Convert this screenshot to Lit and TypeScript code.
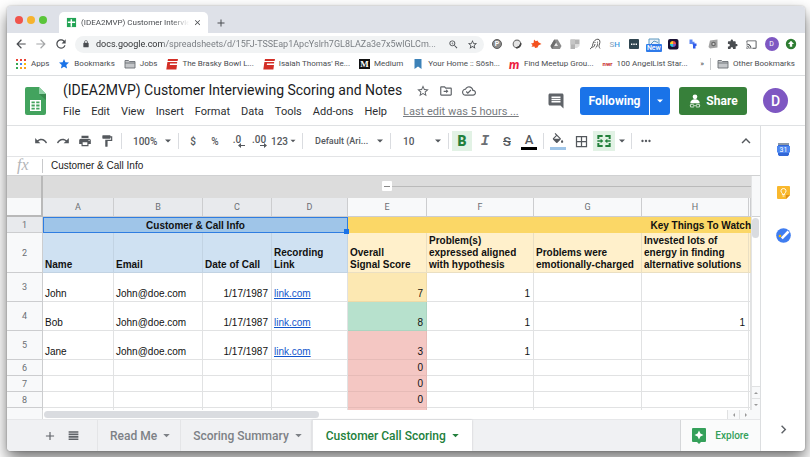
import { LitElement, html, css, svg, nothing } from "lit";
import { customElement } from "lit/decorators.js";
import { classMap } from "lit/directives/class-map.js";

const PATHS = {
  back: "M20 11H7.83l5.59-5.59L12 4l-8 8 8 8 1.41-1.41L7.83 13H20v-2z",
  forward: "M12 4l-1.41 1.41L16.17 11H4v2h12.17l-5.58 5.59L12 20l8-8z",
  refresh: "M17.65 6.35C16.2 4.9 14.21 4 12 4c-4.42 0-7.99 3.58-7.99 8s3.57 8 7.99 8c3.73 0 6.84-2.55 7.73-6h-2.08c-.82 2.33-3.04 4-5.65 4-3.31 0-6-2.69-6-6s2.69-6 6-6c1.66 0 3.14.69 4.22 1.78L13 11h7V4l-2.35 2.35z",
  lock: "M18 8h-1V6c0-2.76-2.24-5-5-5S7 3.24 7 6v2H6c-1.1 0-2 .9-2 2v10c0 1.1.9 2 2 2h12c1.1 0 2-.9 2-2V10c0-1.1-.9-2-2-2zm-3 0H9V6c0-1.66 1.34-3 3-3s3 1.34 3 3v2z",
  zoomIn: "M15.5 14h-.79l-.28-.27C15.41 12.59 16 11.11 16 9.5 16 5.91 13.09 3 9.5 3S3 5.91 3 9.5 5.91 16 9.5 16c1.61 0 3.09-.59 4.23-1.57l.27.28v.79l5 4.99L20.49 19l-4.99-5zm-6 0C7.01 14 5 11.99 5 9.5S7.01 5 9.5 5 14 7.01 14 9.5 11.99 14 9.5 14zM12 10h-2v2H9v-2H7V9h2V7h1v2h2v1z",
  star: "M22 9.24l-7.19-.62L12 2 9.19 8.63 2 9.24l5.46 4.73L5.82 21 12 17.27 18.18 21l-1.63-7.03L22 9.24zM12 15.4l-3.76 2.27 1-4.28-3.32-2.88 4.38-.38L12 6.1l1.71 4.04 4.38.38-3.32 2.88 1 4.28L12 15.4z",
  starFull: "M12 17.27L18.18 21l-1.64-7.03L22 9.24l-7.19-.61L12 2 9.19 8.63 2 9.24l5.46 4.73L5.82 21z",
  cloud: "M19.35 10.04C18.67 6.59 15.64 4 12 4 9.11 4 6.6 5.64 5.35 8.04 2.34 8.36 0 10.91 0 14c0 3.31 2.69 6 6 6h13c2.76 0 5-2.24 5-5 0-2.64-2.05-4.78-4.65-4.96zM19 18H6c-2.21 0-4-1.79-4-4 0-2.05 1.53-3.76 3.56-3.97l1.07-.11.5-.95C8.08 7.14 9.94 6 12 6c2.62 0 4.88 1.86 5.39 4.43l.3 1.5 1.53.11c1.56.1 2.78 1.41 2.78 2.96 0 1.65-1.35 3-3 3zm-9-3.82l-2.09-2.09L6.5 13.5 10 17l6.01-6.01-1.41-1.41z",
  moveTo: "M20 6h-8l-2-2H4c-1.1 0-2 .9-2 2v12c0 1.1.9 2 2 2h16c1.1 0 2-.9 2-2V8c0-1.1-.9-2-2-2zm0 12H4V6h5.2l2 2H20v10zM12.2 16l4-3.5-4-3.5v2.5H8v2h4.200z",
  comment: "M22 4c0-1.100-.9-2-2-2H4c-1.100 0-2 .9-2 2v12c0 1.100.9 2 2 2h14l4 4V4zM18 14H6v-2h12v2zm0-3H6V9h12v2zm0-3H6V6h12v2z",
  undo: "M12.5 8c-2.650 0-5.050.990-6.900 2.600L2 7v9h9l-3.620-3.620c1.390-1.160 3.160-1.880 5.120-1.880 3.540 0 6.550 2.310 7.600 5.500l2.370-.78C21.080 11.030 17.150 8 12.500 8z",
  redo: "M18.400 10.600C16.550 8.990 14.150 8 11.500 8c-4.650 0-8.580 3.030-9.960 7.220L3.900 16c1.050-3.190 4.050-5.500 7.600-5.500 1.950 0 3.730.720 5.120 1.880L13 16h9V7l-3.600 3.600z",
  print: "M19 8H5c-1.66 0-3 1.34-3 3v6h4v4h12v-4h4v-6c0-1.66-1.34-3-3-3zm-3 11H8v-5h8v5zm3-7c-.55 0-1-.45-1-1s.45-1 1-1 1 .45 1 1-.45 1-1 1zm-1-9H6v4h12V3z",
  paint: "M18 4V3c0-.55-.45-1-1-1H5c-.55 0-1 .45-1 1v4c0 .55.45 1 1 1h12c.55 0 1-.45 1-1V6h1v4H9v11c0 .55.45 1 1 1h2c.55 0 1-.45 1-1v-9h8V4h-3z",
  fill: "M16.56 8.94L7.62 0 6.21 1.41l2.38 2.38-5.15 5.15c-.59.59-.59 1.54 0 2.12l5.5 5.5c.29.29.68.44 1.06.44s.77-.15 1.06-.44l5.5-5.5c.59-.58.59-1.53 0-2.12zM5.21 10L10 5.21 14.79 10H5.21zM19 11.5s-2 2.17-2 3.5c0 1.1.9 2 2 2s2-.9 2-2c0-1.33-2-3.5-2-3.5z",
  borders: "M3 3v18h18V3H3zm8 16H5v-6h6v6zm0-8H5V5h6v6zm8 8h-6v-6h6v6zm0-8h-6V5h6v6z",
  merge: "M2 3h8v3H5v3H2zM14 3h8v6h-3V6h-5zM2 15h3v3h5v3H2zM19 15h3v6h-8v-3h5zM2 11h5V8.500l4 3.500-4 3.500V13H2zM22 11h-5V8.500L13 12l4 3.500V13h5z",
  up: "M12 8l-6 6 1.410 1.410L12 10.830l4.590 4.580L18 14z",
  right: "M10 6L8.590 7.410 13.170 12l-4.580 4.590L10 18l6-6z",
  more: "M6 10c-1.100 0-2 .9-2 2s.9 2 2 2 2-.9 2-2-.9-2-2-2zm12 0c-1.100 0-2 .9-2 2s.9 2 2 2 2-.9 2-2-.9-2-2-2zm-6 0c-1.100 0-2 .9-2 2s.9 2 2 2 2-.9 2-2-.9-2-2-2z",
  puzzle: "M20.5 11H19V7c0-1.1-.9-2-2-2h-4V3.5C13 2.12 11.88 1 10.5 1S8 2.12 8 3.500V5H4c-1.1 0-1.990.9-1.990 2v3.800H3.500c1.490 0 2.700 1.210 2.700 2.700s-1.210 2.700-2.700 2.700H2V20c0 1.100.9 2 2 2h3.800v-1.500c0-1.490 1.210-2.700 2.700-2.700 1.490 0 2.700 1.210 2.700 2.700V22H17c1.100 0 2-.9 2-2v-4h1.500c1.380 0 2.500-1.120 2.500-2.500S21.880 11 20.500 11z",
  cast: "M21 3H3c-1.1 0-2 .9-2 2v3h2V5h18v14h-7v2h7c1.1 0 2-.9 2-2V5c0-1.1-.9-2-2-2zM1 18v3h3c0-1.66-1.34-3-3-3zm0-4v2c2.76 0 5 2.24 5 5h2c0-3.87-3.13-7-7-7zm0-4v2c4.97 0 9 4.03 9 9h2c0-6.08-4.93-11-11-11z",
  close: "M19 6.410L17.590 5 12 10.590 6.410 5 5 6.410 10.590 12 5 17.590 6.410 19 12 13.410 17.590 19 19 17.590 13.410 12z",
  plus: "M19 13h-6v6h-2v-6H5v-2h6V5h2v6h6v2z",
  list: "M3 4h18v3H3zM3 8.500h18v3H3zM3 13h18v3H3zM3 17.500h18v3H3z",
  down: "M6 9l6 6 6-6z",
  tabUp: "M6 15l6-6 6 6z",
  tabLeft: "M15 6l-6 6 6 6z",
  tabRight: "M9 6l6 6-6 6z",
};

const icon = (name: keyof typeof PATHS, size = 14) =>
  html`<svg width=${size} height=${size} viewBox="0 0 24 24" fill="currentColor" aria-hidden="true"><path d=${PATHS[name]}></path></svg>`;

const art = (body: unknown, size = 12, box = "0 0 12 12") =>
  html`<svg width=${size} height=${size} viewBox=${box} aria-hidden="true">${body}</svg>`;

const folder = art(svg`<path d="M1 2.500h3.500l1 1H11v6.500H1z" fill="#c4c6c9" stroke="#6b6f74" stroke-width=".9"/><path d="M1 5h10" stroke="#6b6f74" stroke-width=".9"/>`);
const redE = art(svg`<path d="M2 1h10l-.4 2H1.600zM1.400 4h9.800L11 5.500H4l-.2 1.500H11l-.6 4.500H.3z" fill="#d32f27"/>`);

const BOOKMARKS = [
  { label: "Apps", art: art(svg`
      <g fill="#ea4335"><path d="M1 1h2v2H1zM5 1h2v2H5z"/></g><path d="M9 1h2v2H9z" fill="#ea4335"/>
      <path d="M1 5h2v2H1z" fill="#34a853"/><path d="M5 5h2v2H5z" fill="#4285f4"/><path d="M9 5h2v2H9z" fill="#fbbc04"/>
      <path d="M1 9h2v2H1z" fill="#34a853"/><path d="M5 9h2v2H5zM9 9h2v2H9z" fill="#f9a11b"/>`) },
  { label: "Bookmarks", art: html`<span class="blue">${icon("starFull", 12)}</span>` },
  { label: "Jobs", art: folder },
  { label: "The Brasky Bowl L...", art: redE },
  { label: "Isaiah Thomas' Re...", art: redE },
  { label: "Medium", art: html`<span class="medium">M</span>` },
  { label: "Your Home :: Sōsh...", art: art(svg`<path d="M2.500 1h7v10L6 8.500 2.500 11z" fill="#3d82b8"/>`) },
  { label: "Find Meetup Grou...", art: html`<span class="meetup">m</span>` },
  { label: "100 AngelList Star...", art: html`<span class="nwr">nwr</span>` },
];

const EXTENSIONS = [
  { name: "Pinterest", art: html`<span class="pin">P</span>` },
  { name: "Tracker", art: art(svg`<circle cx="6" cy="6" r="3.800" fill="#e4e4e4" stroke="#777" stroke-width="1.200"/><path d="M9.800 5A4 4 0 0 1 5 9.800 6 6 0 0 0 9.800 5z" fill="#444" stroke="#444"/>`) },
  { name: "Bird", art: art(svg`<path d="M4 1.500l1.800 1.700L7.500 2.500l1 1.800L11.500 6 8.600 7.200 7.500 9.500 5 10 4.500 8.500 1.500 8.700 2.600 7 1 5.500l2.600-.6z" fill="#f4511e"/>`) },
  { name: "Drive", art: art(svg`<path d="M4.300 1.500h3.400L11.500 8l-1.600 3H2.100L.5 8z" fill="#8b8b8b"/><path d="M6 4.500L8 8H4z" fill="#e8e8e8"/><path d="M4.300 1.500L6 4.500 2.100 11 .5 8z" fill="#6d6d6d"/>`) },
  { name: "Notes", art: art(svg`<path d="M1.500 1.500h9v5H6V11H1.500z" fill="#b4b4b4"/><path d="M6 6.500h4.500v1.500L8 10H6z" fill="#dedede"/><path d="M1.500 1.500H6v5H1.500z" fill="#c6c6c6"/>`) },
  { name: "Ghost", art: art(svg`<path d="M1 11c2-1 2.500-3 3-5.500S7 1 9 1.200 11.300 4 10.500 6 10 9 11 10.500M3.500 9.500C5 9 5.800 7.500 6 6M6.500 10C8 9 8.600 7 8.500 5.500M5.500 4.500h1M8 4.200h1" fill="none" stroke="#444" stroke-width=".9"/>`) },
  { name: "SH", art: html`<span class="sh">S<b>H</b></span>` },
  { name: "Password", art: art(svg`<rect x="1" y="1" width="10" height="10" rx="1" fill="#2f4550"/><path d="M3 5.500h1.400v1.400H3zM5.300 5.500h1.400v1.400H5.300zM7.600 5.500H9v1.400H7.600z" fill="#fff"/>`) },
  { name: "Inbox", art: html`<span class="fresh">${art(svg`<path d="M1 1h10v7H1z" fill="#e8f1f8" stroke="#5b97bf"/><path d="M3 6l3-3 4 1.500" fill="none" stroke="#5b97bf"/>`)}<i>New</i></span>` },
  { name: "Palette", art: art(svg`<rect x="1" y="1" width="10.500" height="10.500" rx="2" fill="#1a1033"/><path d="M6 3a3 3 0 0 0-3 3h3z" fill="#ffca28"/><path d="M6 3a3 3 0 0 1 3 3H6z" fill="#ef5350"/><path d="M6 9a3 3 0 0 1-3-3h3z" fill="#26c6da"/><path d="M6 9a3 3 0 0 0 3-3H6z" fill="#7e57c2"/>`) },
  { name: "Steps", art: art(svg`<path d="M2.500 1.500h3v2.200h2v3h-2V6h-3z" fill="#5c86f2"/><path d="M6 5.500h3.500V8h-1v2.500H6z" fill="#2f5bea"/>`) },
  { name: "Reader", art: art(svg`<path d="M3 2.500l7.500-1v8L3 10.500 1.500 9z" fill="#a3a3a3"/><circle cx="6.500" cy="6" r="2.300" fill="#6a6a6a"/><circle cx="6.500" cy="6" r="1.100" fill="#d0d0d0"/>`) },
  { name: "Extensions", art: icon("puzzle", 11) },
  { name: "Cast", art: icon("cast", 11) },
  { name: "Profile", art: html`<span class="face">D</span>` },
  { name: "Update", art: art(svg`<circle cx="6" cy="6" r="5.200" fill="#2e7d32"/><path d="M6 2.800L9 6H7.200v2.800H4.800V6H3z" fill="#fff"/>`) },
];

const MENUS = ["File", "Edit", "View", "Insert", "Format", "Data", "Tools", "Add-ons", "Help"];
const COLUMNS = ["A", "B", "C", "D", "E", "F", "G", "H"];
const HEADINGS = [
  "Name", "Email", "Date of Call", "Recording\nLink", "Overall\nSignal Score",
  "Problem(s)\nexpressed aligned\nwith hypothesis", "Problems were\nemotionally-charged",
  "Invested lots of\nenergy in finding\nalternative solutions",
];

interface Row { name?: string; score: string; tone: string; aligned?: string; invested?: string }
const ROWS: Row[] = [
  { name: "John", score: "7", tone: "mid", aligned: "1" },
  { name: "Bob", score: "8", tone: "good", aligned: "1", invested: "1" },
  { name: "Jane", score: "3", tone: "bad", aligned: "1" },
  { score: "0", tone: "bad" },
  { score: "0", tone: "bad" },
  { score: "0", tone: "bad" },
  { score: "", tone: "bad" },
];

const base = css`
  * { box-sizing: border-box; }
  svg { display: block; flex: none; }
  button, input, select {
    font: inherit; color: inherit; background: none; border: 0; padding: 0; margin: 0; border-radius: 0; outline: 0;
  }
  button { display: flex; align-items: center; justify-content: center; white-space: nowrap; }
  a { color: inherit; text-decoration: none; }
`;

@customElement("browser-chrome")
export class BrowserChrome extends LitElement {
  static styles = [base, css`
    :host { display: block; flex: none; color: #4a4d51; }
    .strip { display: flex; align-items: flex-end; height: 27px; background: #dee1e8; }
    .lights { display: flex; align-self: center; gap: 4px; padding: 0 12px 0 8px; }
    .lights button { width: 8px; height: 8px; border-radius: 4px; }
    .lights .close { background: #f0544c; }
    .lights .min { background: #f6b32e; }
    .lights .max { background: #5ac53a; }
    .tab {
      display: flex; align-items: center; gap: 4px; width: 149px; height: 21px; padding: 0 6px 0 7px;
      background: #fff; border-radius: 5px 5px 0 0; font-size: 8px;
    }
    .name {
      flex: 1; min-width: 0; white-space: nowrap;
      mask-image: linear-gradient(to right, #000 84%, transparent);
    }
    .new { width: 26px; height: 21px; }
    .bar { display: flex; align-items: center; height: 22px; padding: 0 4px 0 7px; background: #fff; }
    .nav { display: flex; gap: 6px; margin-right: 7px; }
    .faded { opacity: .5; }
    .url {
      display: flex; align-items: center; flex: 404 1 0; min-width: 0; height: 17px; padding: 0 6px 0 7px;
      gap: 6px; background: #f1f3f4; border-radius: 9px;
    }
    .url input {
      flex: 1; min-width: 0; font-size: 9px; color: transparent; text-overflow: ellipsis;
      background: linear-gradient(to right, #2b2d30 67px, #74787d 67px) text;
    }
    .url button + button { margin-left: 2px; }
    .ext { display: flex; flex: 320 1 0; margin-left: 3px; }
    .ext button { flex: 1; height: 16px; }
    .pin {
      width: 10px; height: 10px; border-radius: 5px; border: 1px solid #5c5c5c; background: #8c8c8c; color: #fff;
      font: bold 7px/8px Roboto, sans-serif;
    }
    .sh { font-size: 8px; color: #8a9fb5; }
    .sh b { color: #3f9ae0; font-weight: 500; }
    .fresh { position: relative; display: flex; }
    .fresh i {
      position: absolute; top: 6px; left: -2px; width: 16px; background: #2f7bea; color: #fff;
      font: 500 7px/8px Roboto, sans-serif; border-radius: 1px;
    }
    .face { width: 14px; height: 14px; border-radius: 7px; background: #7e57c2; color: #fff; font-size: 7px; line-height: 14px; }
    .marks {
      display: flex; align-items: center; height: 21px; padding: 0 10px 3px 8px; gap: 9px;
      background: #fff; border-bottom: 1px solid #dcdee0; font-size: 8px; white-space: nowrap;
    }
    .marks a { display: flex; align-items: center; gap: 4px; flex: none; }
    .blue { color: #1a73e8; }
    .medium { width: 11px; background: #111; color: #fff; font: bold 9px/10px "Liberation Serif", serif; text-align: center; }
    .meetup { width: 11px; color: #ed1c40; font: italic 900 13px/10px Lato, sans-serif; }
    .nwr { color: #c62828; font: bold 6px/10px Roboto, sans-serif; }
    .rest { display: flex; align-items: center; gap: 6px; margin-left: auto; flex: none; }
    .rest a { border-left: 1px solid #c8cacc; padding-left: 6px; }
  `];

  render() {
    return html`
      <div class="strip">
        <div class="lights">
          <button class="close" aria-label="Close window"></button>
          <button class="min" aria-label="Minimise"></button>
          <button class="max" aria-label="Maximise"></button>
        </div>
        <div class="tab">
          ${art(svg`<rect x="1" y="1" width="10" height="10" fill="#23a455"/><path d="M5 2.500h1.600V5H10v1.500H6.600v4H5v-4H2V5h3z" fill="#fff"/>`, 11)}
          <span class="name">(IDEA2MVP) Customer Intervie</span>
          <button aria-label="Close tab">${icon("close", 9)}</button>
        </div>
        <button class="new" aria-label="New tab">${icon("plus", 12)}</button>
      </div>
      <div class="bar">
        <div class="nav">
          <button aria-label="Back">${icon("back")}</button>
          <button class="faded" aria-label="Forward">${icon("forward")}</button>
          <button aria-label="Reload">${icon("refresh")}</button>
        </div>
        <div class="url">
          ${icon("lock", 8)}
          <input aria-label="Address" value="docs.google.com/spreadsheets/d/15FJ-TSSEap1ApcYslrh7GL8LAZa3e7x5wlGLCm..." />
          <button aria-label="Zoom">${icon("zoomIn", 11)}</button>
          <button aria-label="Bookmark this page">${icon("star", 11)}</button>
        </div>
        <div class="ext">
          ${EXTENSIONS.map((e) => html`<button aria-label=${e.name}>${e.art}</button>`)}
        </div>
      </div>
      <nav class="marks">
        ${BOOKMARKS.map((b) => html`<a href="#">${b.art}<span>${b.label}</span></a>`)}
        <div class="rest">
          <button aria-label="More bookmarks">»</button>
          <a href="#">${folder}<span>Other Bookmarks</span></a>
        </div>
      </nav>
    `;
  }
}

@customElement("doc-header")
export class DocHeader extends LitElement {
  static styles = [base, css`
    :host {
      display: flex; flex: none; align-items: center; height: 50px; padding: 0 17px 0 18px;
      border-bottom: 1px solid #dfe1e3; color: #5f6368;
    }
    .text { flex: 1; min-width: 0; margin-left: 17px; }
    .top { display: flex; align-items: center; gap: 9px; height: 22px; }
    h1 { margin: 0 5px 2px 0; font-size: 14px; font-weight: 400; line-height: 20px; color: #1b1c1e; white-space: nowrap; }
    .menus { display: flex; align-items: center; gap: 11px; height: 19px; font-size: 11px; color: #2c2e31; white-space: nowrap; }
    .menus a { margin-left: 5px; color: #777b80; text-decoration: underline; }
    .actions { display: flex; align-items: center; gap: 9px; font-size: 12px; font-weight: 700; color: #fff; }
    .actions button { height: 28px; }
    .note { color: #5f6368; margin-right: 6px; }
    .follow { display: flex; gap: 1px; }
    .follow button { background: #1a73e8; }
    .main { width: 69px; border-radius: 3px 0 0 3px; }
    .drop { width: 20px; border-radius: 0 3px 3px 0; }
    .share { width: 68px; gap: 4px; background: #37803a; border-radius: 3px; }
    .avatar {
      width: 25px; margin-left: 7px; border-radius: 13px; background: #7e57c2; font-size: 14px; font-weight: 500;
    }
    .actions .avatar { height: 25px; }
  `];

  render() {
    return html`
      <svg width="21" height="28" viewBox="0 0 21 28" aria-hidden="true">
        <path d="M2 0h12l7 7v19a2 2 0 0 1-2 2H2a2 2 0 0 1-2-2V2a2 2 0 0 1 2-2z" fill="#43a35e"></path>
        <path d="M14 0l7 7h-7z" fill="#8ed1a4"></path><path d="M14 7h7v6z" fill="#37894d"></path>
        <path d="M5 13h11v11H5zm1.500 1.500v1.700h3.300v-1.700zm4.700 0v1.700h3.300v-1.700zM6.500 17.600v1.800h3.300v-1.800zm4.700 0v1.800h3.300v-1.800zM6.500 20.800v1.700h3.300v-1.700zm4.700 0v1.700h3.300v-1.700z" fill="#fff"></path>
      </svg>
      <div class="text">
        <div class="top">
          <h1>(IDEA2MVP) Customer Interviewing Scoring and Notes</h1>
          <button aria-label="Star">${icon("star")}</button>
          <button aria-label="Move">${icon("moveTo")}</button>
          <button aria-label="Saved to Drive">${icon("cloud")}</button>
        </div>
        <div class="menus">
          ${MENUS.map((m) => html`<button>${m}</button>`)}
          <a href="#">Last edit was 5 hours ...</a>
        </div>
      </div>
      <div class="actions">
        <button class="note" aria-label="Comments">${icon("comment", 18)}</button>
        <div class="follow">
          <button class="main">Following</button>
          <button class="drop" aria-label="Following options">${icon("down", 12)}</button>
        </div>
        <button class="share">
          ${art(svg`<circle cx="6" cy="2.400" r="2" fill="#fff"/><path d="M2 8c0-2.500 2-3.400 4-3.400S10 5.500 10 8z" fill="#fff"/><path d="M5 8.800H3.200a1.200 1.200 0 1 0 0 2.400H5M7 8.800h1.800a1.200 1.200 0 1 1 0 2.400H7M4.300 10h3.400" stroke="#cfe3d0" stroke-width=".9" fill="none"/>`, 14)}
          Share
        </button>
        <button class="avatar" aria-label="Account">D</button>
      </div>
    `;
  }
}

@customElement("format-bar")
export class FormatBar extends LitElement {
  static styles = [base, css`
    :host {
      display: flex; flex: none; align-items: center; height: 31px; padding: 0 3px 0 23px;
      border-bottom: 1px solid #e3e4e6; color: #54585d; font-size: 10px; font-weight: 500;
    }
    button { width: 22px; height: 20px; flex: none; }
    hr { width: 1px; height: 16px; margin: 0 3px; border: 0; background: #dadce0; flex: none; }
    label { display: flex; align-items: center; padding-right: 1px; }
    label select { flex: 1; min-width: 0; appearance: none; }
    .zoom { width: 50px; padding-left: 8px; }
    .font { width: 81px; padding-left: 9px; font-size: 9px; }
    .size { width: 51px; padding-left: 9px; }
    .num { width: 29px; }
    .on { background: #e2f2e5; color: #23803c; }
    .b { width: 20px; margin-right: 2px; font-size: 14px; font-weight: 900; }
    .i { font: italic bold 14px "Liberation Mono", monospace; color: #6b6f74; }
    .s { font-size: 13px; text-decoration: line-through; }
    .stack { flex-direction: column; }
    .a { font-size: 13px; line-height: 14px; }
    .a::after, .f::after { content: ""; width: 16px; height: 3px; background: #000; }
    .f::after { background: #9fc5e8; }
    .grid { width: 24px; }
    .drop { width: 13px; }
    .dec { flex-direction: column; }
    .dec span { line-height: 9px; }
    .dec svg { margin: -1px 0 0 8px; }
    .hide { margin-left: auto; }
  `];

  private caret = icon("down", 12);

  render() {
    const arrow = (flip: boolean) =>
      html`<svg width="7" height="5" viewBox="0 0 7 5" aria-hidden="true"><path d=${flip ? "M0 2h4V0l3 2.500L4 5V3H0z" : "M7 2H3V0L0 2.500 3 5V3h4z"} fill="currentColor"></path></svg>`;
    return html`
      <button aria-label="Undo">${icon("undo")}</button>
      <button aria-label="Redo">${icon("redo")}</button>
      <button aria-label="Print">${icon("print")}</button>
      <button aria-label="Paint format">${icon("paint")}</button>
      <hr />
      <label class="zoom"><select aria-label="Zoom"><option>100%</option></select>${this.caret}</label>
      <hr />
      <button>$</button>
      <button>%</button>
      <button class="dec" aria-label="Fewer decimals"><span>.0</span>${arrow(false)}</button>
      <button class="dec" aria-label="More decimals"><span>.00</span>${arrow(true)}</button>
      <button class="num">123${icon("down", 10)}</button>
      <hr />
      <label class="font"><select aria-label="Font"><option>Default (Ari...</option></select>${this.caret}</label>
      <hr />
      <label class="size"><select aria-label="Font size"><option>10</option></select>${this.caret}</label>
      <hr />
      <button class="b on">B</button>
      <button class="i">I</button>
      <button class="s">S</button>
      <button class="stack a">A</button>
      <hr />
      <button class="stack f" aria-label="Fill colour">${icon("fill")}</button>
      <button class="grid" aria-label="Borders">${icon("borders", 15)}</button>
      <button class="on" aria-label="Merge cells">${icon("merge", 16)}</button>
      <button class="drop" aria-label="Merge options">${this.caret}</button>
      <hr />
      <button aria-label="More">${icon("more")}</button>
      <button class="hide" aria-label="Hide menus">${icon("up", 18)}</button>
    `;
  }
}

@customElement("sheet-grid")
export class SheetGrid extends LitElement {
  static styles = [base, css`
    :host { display: grid; grid-template-columns: 1fr 9px; grid-template-rows: 1fr 9px; flex: 1; min-height: 0; }
    .view { overflow: hidden; min-width: 0; }
    .groups { display: flex; height: 22px; background: #dcdcdc; }
    .edge { width: 36px; border-right: 2px solid #b9b9b9; }
    .track { display: flex; flex: 1; align-items: flex-start; padding: 5px 0 0 339px; }
    .track::after { content: ""; flex: 1; height: 1px; margin-top: 5px; background: #bababa; }
    .fold { width: 10px; height: 10px; background: #fff; border-radius: 1px; }
    .fold::before { content: ""; width: 6px; height: 1px; background: #888; }
    table { width: 100%; table-layout: fixed; border-collapse: separate; border-spacing: 0; font: 10px/12px "Liberation Sans", Arial, sans-serif; color: #111; }
    .n { width: 36px; } .cA { width: 71px; } .cB { width: 89px; } .cC { width: 69px; } .cD { width: 76px; }
    .cE { width: 79px; } .cF, .cH { width: 107px; } .cG { width: 108px; }
    th, td { padding: 0 3px 1px 2px; vertical-align: bottom; border: 0 solid #e1e2e3; border-width: 0 1px 1px 0; text-align: left; overflow: hidden; }
    thead th, th[scope="row"] {
      padding: 0; text-align: center; vertical-align: middle; background: #f8f9fa; color: #6b6f74;
      font: 9px/10px Roboto, sans-serif; border-color: #cccdcf;
    }
    thead tr { height: 19px; }
    thead .sel { background: #e8eaed; }
    thead .corner { border: solid #b9b9b9; border-width: 0 2px 2px 0; }
    .title { height: 16px; }
    .title th[scope="row"] { background: #e8eaed; }
    .title td { font-weight: 700; text-align: center; line-height: 11px; vertical-align: middle; }
    .title .info { position: relative; overflow: visible; background: #9fc5e8; border: 1px solid #2f7de1; padding: 0; }
    .info::after { content: ""; position: absolute; right: -2px; bottom: -2px; width: 5px; height: 5px; background: #1a73e8; }
    .title .watch { background: #fbd766; text-align: right; padding: 0; border-width: 0; }
    .heads { height: 40px; font-weight: 700; }
    .heads td { background: #fff0cb; border-color: #eadfc2; white-space: pre-line; }
    .heads .soft { background: #cfe1f2; border-color: #c2d3e3; }
    .tall { height: 29px; }
    .low { height: 16px; }
    .num { text-align: right; }
    .mid { background: #fce8b2; border-color: #eedaa8; }
    .good { background: #b7e1cd; border-color: #acd4c1; }
    .bad { background: #f4c7c3; border-color: #e6bbb7; }
    td a { color: #1155cc; text-decoration: underline; }
    .vbar, .hbar { background: #fff; color: #999; display: flex; }
    .vbar { flex-direction: column; border-left: 1px solid #e3e4e5; }
    .vhead { height: 41px; background: #f8f9fa; border-bottom: 1px solid #d0d1d3; flex: none; }
    .vthumb { width: 7px; height: 20px; margin: 1px 0 auto; background: #dadce0; border-radius: 4px; flex: none; }
    .vbar button { height: 12px; background: #f8f9fa; border-top: 1px solid #e0e1e2; }
    .hbar { align-items: center; }
    .hstart { width: 36px; align-self: stretch; background: #f8f9fa; border-right: 1px solid #d8d9da; }
    .hthumb { flex: 0 0 37%; height: 7px; margin: 0 auto 0 1px; background: #dadce0; border-radius: 4px; }
    .hbar button { width: 12px; height: 9px; background: #f8f9fa; border-left: 1px solid #e0e1e2; }
    .nook { background: #f8f9fa; }
  `];

  private body(row: Row, i: number) {
    const filled = !!row.name;
    return html`
      <tr class=${filled ? "tall" : "low"}>
        <th scope="row">${row.score ? i + 3 : nothing}</th>
        <td>${row.name}</td>
        <td>${filled ? "John@doe.com" : nothing}</td>
        <td class="num">${filled ? "1/17/1987" : nothing}</td>
        <td>${filled ? html`<a href="#">link.com</a>` : nothing}</td>
        <td class=${classMap({ num: true, [row.tone]: true })}>${row.score}</td>
        <td class="num">${row.aligned}</td>
        <td></td>
        <td class="num">${row.invested}</td>
        <td></td>
      </tr>
    `;
  }

  render() {
    return html`
      <div class="view">
        <div class="groups">
          <div class="edge"></div>
          <div class="track"><button class="fold" aria-label="Collapse group"></button></div>
        </div>
        <table>
          <colgroup>
            <col class="n" />${COLUMNS.map((c) => html`<col class="c${c}" />`)}<col />
          </colgroup>
          <thead>
            <tr>
              <th class="corner"></th>
              ${COLUMNS.map((c, i) => html`<th scope="col" class=${classMap({ sel: i < 4 })}>${c}</th>`)}
              <th></th>
            </tr>
          </thead>
          <tbody>
            <tr class="title">
              <th scope="row">1</th>
              <td class="info" colspan="4">Customer &amp; Call Info</td>
              <td class="watch" colspan="5">Key Things To Watch</td>
            </tr>
            <tr class="heads">
              <th scope="row">2</th>
              ${HEADINGS.map((h, i) => html`<td class=${classMap({ soft: i < 4 })}>${h}</td>`)}
              <td></td>
            </tr>
            ${ROWS.map((r, i) => this.body(r, i))}
          </tbody>
        </table>
      </div>
      <div class="vbar">
        <div class="vhead"></div>
        <div class="vthumb"></div>
        <button aria-label="Scroll up">${icon("tabUp", 8)}</button>
        <button aria-label="Scroll down">${icon("down", 8)}</button>
      </div>
      <div class="hbar">
        <div class="hstart"></div>
        <div class="hthumb"></div>
        <button aria-label="Scroll left">${icon("tabLeft", 8)}</button>
        <button aria-label="Scroll right">${icon("tabRight", 8)}</button>
      </div>
      <div class="nook"></div>
    `;
  }
}

@customElement("sheet-tabs")
export class SheetTabs extends LitElement {
  static styles = [base, css`
    :host {
      display: flex; flex: none; height: 32px; background: #f0f1f3; border-top: 1px solid #e6e7e9;
      color: #7d8186; font-size: 12px; font-weight: 500;
    }
    .tools { display: flex; align-items: center; gap: 10px; padding: 0 17px 0 36px; color: #5f6368; }
    .tab { gap: 3px; padding: 0 7px 0 12px; border-left: 1px solid #e4e5e7; }
    .active { background: #fff; color: #23803c; padding: 0 10px 0 13px; box-shadow: 0 0 2px #c3c5c8; }
    .explore {
      margin-left: auto; width: 80px; gap: 9px; background: #fafbfb; color: #34a05a; font-size: 10px;
      border-left: 1px solid #d5d7d9;
    }
  `];

  render() {
    return html`
      <div class="tools">
        <button aria-label="Add sheet">${icon("plus")}</button>
        <button aria-label="All sheets">${icon("list", 13)}</button>
      </div>
      <button class="tab">Read Me ${icon("down", 13)}</button>
      <button class="tab">Scoring Summary ${icon("down", 13)}</button>
      <button class="tab active">Customer Call Scoring ${icon("down", 13)}</button>
      <button class="explore">
        <svg width="14" height="16" viewBox="0 0 14 16" aria-hidden="true">
          <path d="M1 0h12a1 1 0 0 1 1 1v12a1 1 0 0 1-1 1H9l-2 2-2-2H1a1 1 0 0 1-1-1V1a1 1 0 0 1 1-1z" fill="#34a05a"></path>
          <path d="M7 2.500l1.400 3.100L11.500 7 8.400 8.400 7 11.500 5.600 8.400 2.500 7l3.100-1.400z" fill="#fff"></path>
        </svg>
        Explore
      </button>
    `;
  }
}

@customElement("app-root")
export class AppRoot extends LitElement {
  static styles = [base, css`
    :host {
      display: flex; height: 100vh; box-sizing: border-box; padding: 6px 5px 6px 7px; overflow: hidden;
      background: #fff; font-family: Roboto, "Liberation Sans", sans-serif; line-height: normal;
    }
    .window {
      display: flex; flex-direction: column; flex: 1; min-width: 0; overflow: hidden; background: #fff;
      border-radius: 4px; box-shadow: 0 8px 16px rgba(0, 0, 0, .55), 0 0 2px rgba(0, 0, 0, .3);
    }
    .body { display: flex; flex: 1; min-height: 0; }
    .doc { display: flex; flex-direction: column; flex: 1; min-width: 0; }
    .formula { display: flex; align-items: center; flex: none; height: 19px; padding: 0 0 1px 10px; border-bottom: 1px solid #d0d1d2; }
    .fx { width: 26px; height: 14px; border-right: 1px solid #c8c9cb; color: #b3b5b8; font: italic 16px/12px "Liberation Serif", serif; }
    .formula input { flex: 1; min-width: 0; padding-left: 8px; font: 10px "Liberation Sans", Arial, sans-serif; color: #222; }
    .side {
      display: flex; flex-direction: column; align-items: center; gap: 28px; width: 45px; flex: none;
      padding: 16px 0 13px; border-left: 1px solid #dcdee0; color: #5f6368;
    }
    .side .fold { margin-top: auto; }
  `];

  render() {
    return html`
      <main class="window">
        <browser-chrome></browser-chrome>
        <doc-header></doc-header>
        <div class="body">
          <div class="doc">
            <format-bar></format-bar>
            <label class="formula">
              <span class="fx">fx</span>
              <input aria-label="Formula" value="Customer &amp; Call Info" />
            </label>
            <sheet-grid></sheet-grid>
            <sheet-tabs></sheet-tabs>
          </div>
          <aside class="side">
            <button aria-label="Calendar">
              <svg width="15" height="15" viewBox="0 0 15 15" aria-hidden="true">
                <path d="M2 1h11v3H2z" fill="#8b98a8"></path><path d="M2 3h11v9.500l-1 1.500H3l-1-1.500z" fill="#3367d6"></path>
                <path d="M1 4h13v6l-1 1H2l-1-1z" fill="#4c86f0"></path>
                <text x="7.500" y="10" font-size="7" text-anchor="middle" fill="#fff">31</text>
              </svg>
            </button>
            <button aria-label="Keep">
              <svg width="15" height="15" viewBox="0 0 15 15" aria-hidden="true">
                <path d="M2 1h11a1 1 0 0 1 1 1v8l-4 4H2a1 1 0 0 1-1-1V2a1 1 0 0 1 1-1z" fill="#f9b82d"></path>
                <path d="M14 10l-4 4v-4z" fill="#e08e16"></path>
                <path d="M7.500 3.500a2.500 2.500 0 0 0-1.200 4.700V9.500h2.400V8.200A2.500 2.500 0 0 0 7.500 3.500zM6.500 11h2" fill="none" stroke="#fff" stroke-width=".9"></path>
              </svg>
            </button>
            <button aria-label="Tasks">
              <svg width="15" height="15" viewBox="0 0 15 15" aria-hidden="true">
                <circle cx="7.500" cy="7.500" r="7.300" fill="#3f7df0"></circle>
                <path d="M5.800 10.300L12.500 3.500" stroke="#fff" stroke-width="2.600"></path>
                <circle cx="4" cy="8" r="1.300" fill="#fbbc04"></circle>
              </svg>
            </button>
            <button class="fold" aria-label="Hide side panel">${icon("right", 17)}</button>
          </aside>
        </div>
      </main>
    `;
  }
}
